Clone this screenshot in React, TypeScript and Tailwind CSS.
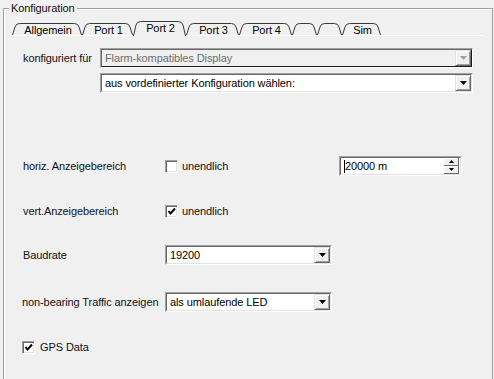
import React from 'react';

type Tab = { label: string; w: number; active?: boolean };

const TABS: Tab[] = [
  { label: 'Allgemein', w: 70 },
  { label: 'Port 1', w: 51 },
  { label: 'Port 2', w: 53, active: true },
  { label: 'Port 3', w: 53 },
  { label: 'Port 4', w: 53 },
  { label: '', w: 25 },
  { label: '', w: 25 },
  { label: 'Sim', w: 39 },
];

function TabShape({ w, h, fill }: { w: number; h: number; fill: string }) {
  const d = `M0.5 ${h} L3 4 Q4 0.5 7.5 0.5 L${w - 7.5} 0.5 Q${w - 4} 0.5 ${w - 3} 4 L${w - 0.5} ${h}`;
  return (
    <svg width={w} height={h} className="absolute left-0 top-0">
      <path d={d} fill={fill} stroke="#3a3a3a" strokeWidth="1" />
    </svg>
  );
}

function TabButton({ tab }: { tab: Tab }) {
  if (tab.active) {
    return (
      <div className="relative z-10 h-[15px] -mb-px flex justify-center text-black leading-[12px] pl-[2px] pt-[1px]" style={{ width: tab.w }}>
        <TabShape w={tab.w} h={15} fill="#f0f0f0" />
        <span className="relative">{tab.label}</span>
      </div>
    );
  }
  return (
    <div className="relative h-[12px] flex justify-center text-black leading-[12px] pl-[2px] pt-[1px]" style={{ width: tab.w }}>
      <TabShape w={tab.w} h={12} fill="none" />
      <span className="relative">{tab.label}</span>
    </div>
  );
}

function Arrow({ color }: { color: string }) {
  return (
    <svg width="7" height="4">
      <polygon points="0,0 7,0 3.5,4" fill={color} />
    </svg>
  );
}

function DropButton({ disabled }: { disabled?: boolean }) {
  return (
    <div className="w-[16px] h-full flex items-center justify-center bg-[#f0f0f0] border-t border-l border-t-[#e3e3e3] border-l-[#e3e3e3] border-b border-r border-b-[#696969] border-r-[#696969] shadow-[inset_1px_1px_0_#fff,inset_-1px_-1px_0_#a0a0a0]">
      <Arrow color={disabled ? '#a0a0a0' : '#000'} />
    </div>
  );
}

function Combo({ text, wide, disabled }: { text: string; wide?: boolean; disabled?: boolean }) {
  return (
    <div className={`${wide ? 'w-[373px]' : 'w-[167px]'} h-[20px] flex border border-t-[#a0a0a0] border-l-[#a0a0a0] border-b-white border-r-white`}>
      <div className={`flex-1 flex border border-t-[#696969] border-l-[#696969] ${disabled ? 'border-b-[#1a1a1a] border-r-[#1a1a1a] bg-[#f0f0f0] text-[#6d6d6d]' : 'border-b-[#e3e3e3] border-r-[#e3e3e3] bg-white text-black'}`}>
        <span className="flex-1 pl-[3px] leading-[16px] whitespace-nowrap overflow-hidden">{text}</span>
        <DropButton disabled={disabled} />
      </div>
    </div>
  );
}

function Check({ checked }: { checked?: boolean }) {
  return (
    <div className="w-[13px] h-[13px] shrink-0 flex items-center justify-center bg-white border border-t-[#a0a0a0] border-l-[#a0a0a0] border-b-white border-r-white shadow-[inset_1px_1px_0_#696969,inset_-1px_-1px_0_#e3e3e3]">
      {checked && (
        <svg width="9" height="9" viewBox="0 0 9 9">
          <polyline points="1.5,4 3.5,6.5 8,1.5" fill="none" stroke="#000" strokeWidth="2" />
        </svg>
      )}
    </div>
  );
}

function SpinEdit() {
  return (
    <div className="w-[123px] h-[20px] flex border border-t-[#a0a0a0] border-l-[#a0a0a0] border-b-white border-r-white">
      <div className="flex-1 flex items-center border border-t-[#696969] border-l-[#696969] border-b-[#e3e3e3] border-r-[#e3e3e3] bg-white pr-px">
        <span className="w-px h-[13px] bg-black ml-[3px]" />
        <span className="flex-1 leading-[16px] text-black">20000 m</span>
        <div className="w-[15px] h-[16px] flex flex-col">
          <div className="h-[8px] flex items-center justify-center bg-[#f0f0f0] border-b border-r border-b-[#696969] border-r-[#696969] shadow-[inset_1px_1px_0_#fff]">
            <svg width="5" height="3"><polygon points="0,3 5,3 2.5,0" fill="#000" /></svg>
          </div>
          <div className="h-[8px] flex items-center justify-center bg-[#f0f0f0] border-b border-r border-b-[#696969] border-r-[#696969] shadow-[inset_1px_1px_0_#fff]">
            <svg width="5" height="3"><polygon points="0,0 5,0 2.5,3" fill="#000" /></svg>
          </div>
        </div>
      </div>
    </div>
  );
}

export default function App() {
  return (
    <div className="w-[494px] h-[379px] overflow-hidden bg-[#f0f0f0] text-[11px] tracking-[-0.1px] text-[#101018] font-['Liberation_Sans',Arial,sans-serif] pt-[8px] pl-[3px]">
      <div className="relative w-[490px] h-[390px] border border-[#a0a0a0] shadow-[inset_1px_1px_0_#fff] flex flex-col">
        <div className="absolute left-[5px] top-[-7px] px-[2px] bg-[#f0f0f0] leading-[13px]">Konfiguration</div>

        {/* tab strip */}
        <div className="mt-[12px] ml-[6px] w-[474px] h-[15px] border-b border-white flex items-end pl-[2px]">
          {TABS.map((t, i) => (
            <TabButton key={i} tab={t} />
          ))}
        </div>

        <div className="mt-[12px] pl-[19px] h-[20px] flex items-center">
          <span className="w-[77px] whitespace-nowrap">konfiguriert für</span>
          <Combo text="Flarm-kompatibles Display" wide disabled />
        </div>
        <div className="mt-[5px] pl-[96px] h-[20px] flex items-center">
          <Combo text="aus vordefinierter Konfiguration wählen:" wide />
        </div>

        <div className="mt-[63px] pl-[19px] h-[20px] flex items-center">
          <span className="w-[142px] whitespace-nowrap">horiz. Anzeigebereich</span>
          <div className="w-[174px] flex items-center gap-[4px]">
            <Check />
            <span>unendlich</span>
          </div>
          <SpinEdit />
        </div>

        <div className="mt-[25px] pl-[19px] h-[20px] flex items-center">
          <span className="w-[142px] whitespace-nowrap">vert.Anzeigebereich</span>
          <div className="flex items-center gap-[4px]">
            <Check checked />
            <span>unendlich</span>
          </div>
        </div>

        <div className="mt-[24px] pl-[19px] h-[20px] flex items-center">
          <span className="w-[142px] whitespace-nowrap">Baudrate</span>
          <Combo text="19200" />
        </div>

        <div className="mt-[27px] pl-[18px] h-[20px] flex items-center">
          <span className="w-[143px] whitespace-nowrap">non-bearing Traffic anzeigen</span>
          <Combo text="als umlaufende LED" />
        </div>

        <div className="mt-[25px] pl-[18px] h-[20px] flex items-center gap-[5px]">
          <Check checked />
          <span>GPS Data</span>
        </div>
      </div>
    </div>
  );
}
